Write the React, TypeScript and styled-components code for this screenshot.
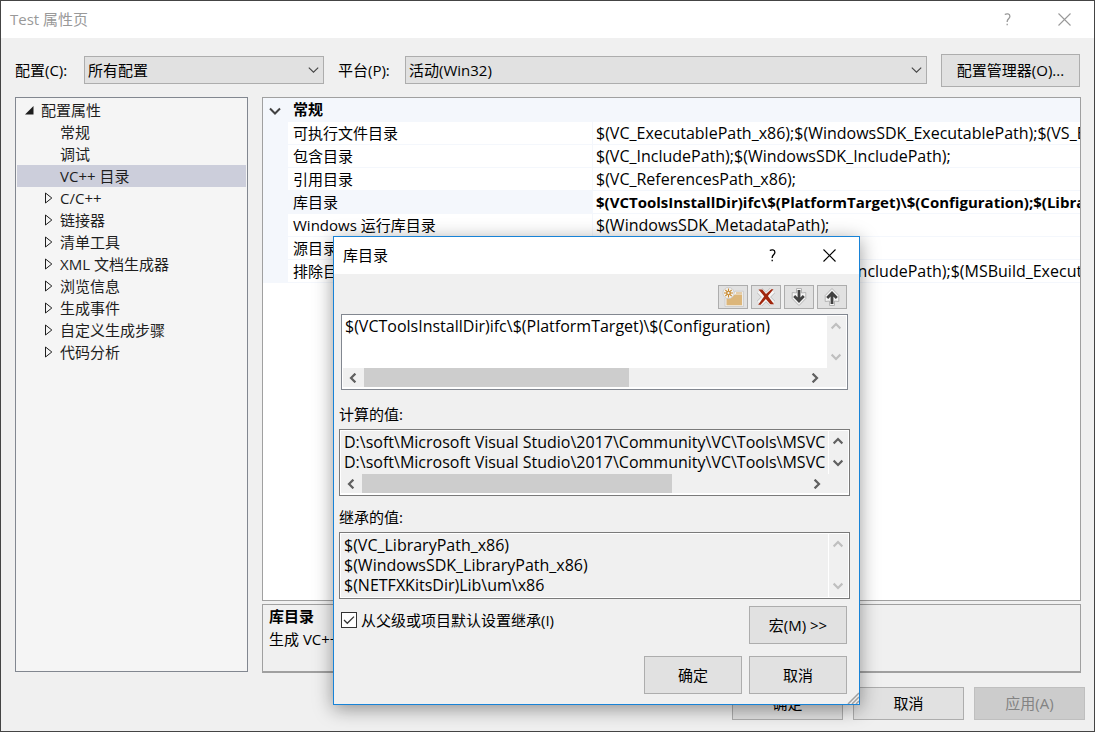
import React from "react";
import styled, { createGlobalStyle } from "styled-components";

const GlobalStyle = createGlobalStyle`
  *, *::before, *::after { box-sizing: border-box; }
  body { margin: 0; background: #f0f0f0; }
  body, button, select, textarea, input {
    font-family: "Open Sans", "Noto Sans CJK SC", sans-serif;
    font-size: 15px;
    line-height: 20px;
    color: #000;
  }
`;

const Window = styled.main`
  position: relative;
  display: flex;
  flex-direction: column;
  min-height: 100vh;
  border: 1px solid #444;
  background: #f0f0f0;
  overflow: hidden;
`;

const TitleBar = styled.header<{ $muted?: boolean }>`
  display: flex;
  align-items: center;
  height: 37px;
  flex: none;
  padding: 0 8px 1px 9px;
  background: #fff;
  color: ${(p) => (p.$muted ? "#999" : "#000")};
`;

const Title = styled.h1`
  flex: 1;
  margin: 0;
  font-size: 15px;
  font-weight: 400;
`;

const CaptionButton = styled.button`
  display: flex;
  align-items: center;
  justify-content: center;
  width: 44px;
  height: 30px;
  margin-left: 13px;
  padding: 0;
  border: 0;
  background: none;
  color: inherit;
`;

const ConfigBar = styled.div`
  display: flex;
  align-items: flex-start;
  flex: none;
  height: 33px;
  margin: 16px 14px 10px;
`;

const FieldLabel = styled.label<{ $width: number }>`
  flex: none;
  width: ${(p) => p.$width}px;
  padding-top: 6px;
  white-space: nowrap;
`;

const SelectWrap = styled.span<{ $width?: number }>`
  position: relative;
  display: flex;
  flex: ${(p) => (p.$width ? `0 0 ${p.$width}px` : "1 1 0")};
  margin: 2px 14px 0 0;
  svg {
    position: absolute;
    right: 5px;
    top: 11px;
    pointer-events: none;
  }
`;

const Select = styled.select`
  appearance: none;
  width: 100%;
  height: 28px;
  padding: 0 24px 0 3px;
  border: 1px solid #adadad;
  border-radius: 0;
  background: #e1e1e1;
`;

const PushButton = styled.button<{ $width: number; $tall?: boolean }>`
  flex: none;
  width: ${(p) => p.$width}px;
  height: ${(p) => (p.$tall ? 38 : 33)}px;
  padding: ${(p) => (p.$tall ? "0" : "0 0 2px")};
  border: 1px solid #adadad;
  background: #e1e1e1;
  white-space: nowrap;
  &:disabled {
    border-color: #bfbfbf;
    background: #ccc;
    color: #838383;
  }
`;

const Panels = styled.div`
  display: grid;
  grid-template-columns: 233px minmax(0, 1fr);
  column-gap: 14px;
  flex: 1;
  padding: 0 13px 0 14px;
`;

const Tree = styled.ul`
  margin: 0 0 1px;
  padding: 1px;
  list-style: none;
  border: 1px solid #828790;
  background: #f5f5f5;
  color: #1e1e1e;
`;

const TreeRow = styled.li<{ $root?: boolean; $selected?: boolean }>`
  display: flex;
  align-items: center;
  height: 22px;
  padding-left: ${(p) => (p.$root ? 8 : 27)}px;
  background: ${(p) => (p.$selected ? "#cccedb" : "transparent")};
  white-space: nowrap;
`;

const TreeGlyph = styled.span`
  display: flex;
  width: 16px;
`;

const Details = styled.div`
  display: flex;
  flex-direction: column;
  gap: 3px;
  min-width: 0;
`;

const PropertyPane = styled.section`
  flex: 1;
  border: 1px solid #a0a0a0;
  background: #fff;
  overflow: hidden;
`;

const PropertyTable = styled.table`
  width: 100%;
  table-layout: fixed;
  border-collapse: separate;
  border-spacing: 0;
`;

const Gutter = styled.td`
  padding: 0 0 3px;
  background: #f4f7fc;
`;

const GroupName = styled.th`
  height: 24px;
  padding: 0 5px 3px;
  background: #f4f7fc;
  text-align: left;
  font-weight: 700;
`;

const PropertyName = styled.th<{ $selected?: boolean }>`
  height: 23px;
  padding: 0 5px 1px;
  border-right: 1px solid #f4f7fc;
  border-bottom: 1px solid #f4f7fc;
  background: ${(p) => (p.$selected ? "#f4f7fc" : "#fff")};
  text-align: left;
  font-weight: 400;
  white-space: nowrap;
`;

const PropertyValue = styled.td<{ $bold?: boolean }>`
  height: 23px;
  padding: 0 0 1px 3px;
  border-bottom: 1px solid #f4f7fc;
  font-size: ${(p) => (p.$bold ? 15 : 16)}px;
  font-weight: ${(p) => (p.$bold ? 700 : 400)};
  white-space: nowrap;
  overflow: hidden;
`;

const Description = styled.section`
  height: 69px;
  padding: 0 6px;
  border: 1px solid #a0a0a0;
  border-bottom-width: 2px;
  h2, p { margin: 0; font-size: 15px; line-height: 23px; }
`;

const WindowActions = styled.footer`
  display: flex;
  justify-content: flex-end;
  gap: 10px;
  flex: none;
  padding: 14px 9px 11px;
`;

const Dialog = styled.section`
  position: absolute;
  left: 332px;
  top: 235px;
  width: 527px;
  border: 1px solid #1883d7;
  background: #f0f0f0;
  box-shadow: 0 4px 18px rgba(0, 0, 0, 0.4);
`;

const DialogBody = styled.div`
  padding: 11px 9px 10px 5px;
`;

const IconBar = styled.div`
  display: flex;
  justify-content: flex-end;
  gap: 3px;
  margin: 0 3px 5px;
`;

const IconButton = styled.button`
  display: flex;
  align-items: center;
  justify-content: center;
  width: 30px;
  height: 24px;
  padding: 0;
  border: 1px solid #adadad;
  background: #e1e1e1;
`;

const CaptionLabel = styled.label`
  display: block;
  margin: 11px 0 5px;
`;

const EditorFrame = styled.div<{ $editable?: boolean }>`
  display: grid;
  grid-template-columns: minmax(0, 1fr) 20px;
  grid-template-rows: minmax(0, 1fr) auto;
  height: ${(p) => (p.$editable ? 76 : 67)}px;
  margin: ${(p) => (p.$editable ? "0 2px 14px" : "0")};
  padding: 1px;
  border: 1px solid ${(p) => (p.$editable ? "#828790" : "#7a7a7a")};
  background: ${(p) => (p.$editable ? "#fff" : "#f0f0f0")};
  box-shadow: inset 0 0 0 1px #fff;
`;

const Editor = styled.textarea`
  display: block;
  width: 100%;
  height: 100%;
  padding: 0 2px;
  border: 0;
  outline: 0;
  background: transparent;
  font-size: 16px;
  resize: none;
  overflow: hidden;
  white-space: pre;
  &:read-only { padding: 1px 3px 0; }
`;

const VerticalBar = styled.div<{ $dim?: boolean }>`
  display: flex;
  flex-direction: column;
  justify-content: space-between;
  padding-bottom: 1px;
  border-left: 1px solid #fff;
  background: #f0f0f0;
  color: ${(p) => (p.$dim ? "#bfbfbf" : "#606060")};
`;

const HorizontalBar = styled.div`
  display: flex;
  grid-column: 1 / 3;
  height: 20px;
  padding-right: 22px;
  border-bottom: 1px solid #fff;
  background: #f0f0f0;
  color: #606060;
`;

const ScrollTrack = styled.div`
  flex: 1;
  padding-left: 2px;
`;

const ScrollThumb = styled.div<{ $width: number }>`
  width: ${(p) => p.$width}px;
  height: 19px;
  background: #cdcdcd;
`;

const ScrollButton = styled.button`
  display: flex;
  align-items: center;
  justify-content: center;
  width: 19px;
  height: 20px;
  padding: 0 2px 0 0;
  border: 0;
  background: none;
  color: inherit;
  ${HorizontalBar} & { padding-right: 0; }
`;

const DialogRow = styled.div<{ $gap: number }>`
  display: flex;
  align-items: flex-start;
  justify-content: flex-end;
  gap: 7px;
  margin: ${(p) => p.$gap}px 3px 0 2px;
`;

const CheckLabel = styled.label`
  position: relative;
  display: flex;
  align-items: center;
  gap: 4px;
  flex: 1;
  margin-top: 4px;
  svg {
    position: absolute;
    left: 2px;
    top: 4px;
    pointer-events: none;
  }
`;

const CheckBox = styled.input`
  appearance: none;
  width: 16px;
  height: 16px;
  margin: 0;
  border: 1px solid #333;
  background: #fff;
`;

const Grip = styled.svg`
  position: absolute;
  right: 0;
  bottom: 0;
`;

const CloseIcon = () => (
  <svg width="13" height="13" viewBox="0 0 13 13" stroke="currentColor" strokeWidth="1.1" aria-hidden="true">
    <path d="M.5.5l12 12M12.5.5l-12 12" />
  </svg>
);

const HelpIcon = () => (
  <svg width="7" height="13" viewBox="0 0 7 13" fill="none" stroke="currentColor" strokeWidth="1.3" aria-hidden="true">
    <path d="M.8 1.6C2.5.3 5.9.5 5.9 3.2c0 2.4-2.7 2.6-2.7 5.2v.7M3.2 10.8v1.5" />
  </svg>
);

const ComboArrow = () => (
  <svg width="11" height="6" viewBox="0 0 11 6" fill="none" stroke="#444" strokeWidth="1.1" aria-hidden="true">
    <path d="M.8.6l4.7 4.6L10.2.6" />
  </svg>
);

const turns = { up: 0, right: 90, down: 180, left: 270 };

const Chevron = ({ to }: { to: keyof typeof turns }) => (
  <svg width="10" height="10" viewBox="0 0 10 10" fill="none" stroke="currentColor" strokeWidth="2.2" aria-hidden="true">
    <path d="M.6 7.4L5 3l4.400 4.400" transform={`rotate(${turns[to]} 5 5)`} />
  </svg>
);

const NewFolderIcon = () => (
  <svg width="22" height="20" viewBox="0 0 22 20" aria-hidden="true">
    <path d="M3 11v8.600h18.400V4.200H13L11.500 6.500H8z" fill="#f3f1ee" stroke="#c6c6c6" strokeWidth=".8" />
    <path d="M4.500 8.800h6.800l1.600-1.300h7.100v10.800H4.500z" fill="#dcb67a" />
    <path d="M14 5.400h6v1.200h-6z" fill="#dcb67a" />
    <circle cx="6.500" cy="6" r="5.600" fill="#f3f1ee" stroke="#c6c6c6" strokeWidth=".8" />
    <path d="M6.500 1.500v9M2 6h9M3.300 2.800l6.400 6.400M9.700 2.800L3.300 9.200" stroke="#c98a2e" strokeWidth="1.100" />
    <circle cx="6.500" cy="6" r="1.700" fill="#f3f1ee" stroke="#c27d1a" />
  </svg>
);

const DeleteIcon = () => (
  <svg width="20" height="20" viewBox="0 0 20 20" fill="none" aria-hidden="true">
    <path d="M3.500 3.500l13 13M16.500 3.500l-13 13" stroke="#bdbdbd" strokeWidth="7.400" />
    <path d="M3.500 3.500l13 13M16.500 3.500l-13 13" stroke="#f5f5f5" strokeWidth="6" />
    <path d="M2.500 2.500h3.800L10 6.900l5.300-4.600h2.200l-5.600 6.800 6.100 8.100h-3.700L9.800 11.900 4.600 17.700H2.200l6-8.400z" fill="#a1260d" />
  </svg>
);

const MoveIcon = ({ up }: { up?: boolean }) => (
  <svg width="16" height="18" viewBox="0 0 16 18" fill="none" aria-hidden="true">
    <g transform={up ? "rotate(180 8 9)" : undefined}>
      <path d="M5.500.5h5v4.500L14.800 4.500v6L8 17.500 1.200 10.500v-6l4.300.5z" fill="#f5f5f5" stroke="#b4b4b4" />
      <path d="M8 2v11.500M3.200 8L8 12.900 12.800 8" stroke="#424242" strokeWidth="2.800" />
    </g>
  </svg>
);

const treeItems = [
  { text: "配置属性", root: true },
  { text: "常规", leaf: true },
  { text: "调试", leaf: true },
  { text: "VC++ 目录", leaf: true, selected: true },
  { text: "C/C++" },
  { text: "链接器" },
  { text: "清单工具" },
  { text: "XML 文档生成器" },
  { text: "浏览信息" },
  { text: "生成事件" },
  { text: "自定义生成步骤" },
  { text: "代码分析" },
];

const properties = [
  { name: "可执行文件目录", value: "$(VC_ExecutablePath_x86);$(WindowsSDK_ExecutablePath);$(VS_ExecutablePath);" },
  { name: "包含目录", value: "$(VC_IncludePath);$(WindowsSDK_IncludePath);" },
  { name: "引用目录", value: "$(VC_ReferencesPath_x86);" },
  { name: "库目录", value: "$(VCToolsInstallDir)ifc\\$(PlatformTarget)\\$(Configuration);$(LibraryPath)", selected: true },
  { name: "Windows 运行库目录", value: "$(WindowsSDK_MetadataPath);" },
  { name: "源目录", value: "$(VC_SourcePath);" },
  { name: "排除目录", value: "$(VC_IncludePath);$(WindowsSDK_IncludePath);$(MSBuild_ExecutablePath);" },
];

interface ScrollBoxProps {
  id: string;
  text: string;
  label?: string;
  editable?: boolean;
  dim?: boolean;
  thumb?: number;
}

const ScrollBox = ({ id, text, label, editable, dim, thumb }: ScrollBoxProps) => (
  <EditorFrame $editable={editable}>
    <Editor id={id} aria-label={label} wrap="off" readOnly={!editable} defaultValue={text} />
    <VerticalBar $dim={dim}>
      <ScrollButton aria-label="向上滚动"><Chevron to="up" /></ScrollButton>
      <ScrollButton aria-label="向下滚动"><Chevron to="down" /></ScrollButton>
    </VerticalBar>
    {thumb && (
      <HorizontalBar>
        <ScrollButton aria-label="向左滚动"><Chevron to="left" /></ScrollButton>
        <ScrollTrack><ScrollThumb $width={thumb} /></ScrollTrack>
        <ScrollButton aria-label="向右滚动"><Chevron to="right" /></ScrollButton>
      </HorizontalBar>
    )}
  </EditorFrame>
);

const DirectoryDialog = () => (
  <Dialog role="dialog" aria-label="库目录">
    <TitleBar>
      <Title as="h2">库目录</Title>
      <CaptionButton aria-label="帮助"><HelpIcon /></CaptionButton>
      <CaptionButton aria-label="关闭"><CloseIcon /></CaptionButton>
    </TitleBar>
    <DialogBody>
      <IconBar>
        <IconButton aria-label="新行"><NewFolderIcon /></IconButton>
        <IconButton aria-label="删除"><DeleteIcon /></IconButton>
        <IconButton aria-label="下移"><MoveIcon /></IconButton>
        <IconButton aria-label="上移"><MoveIcon up /></IconButton>
      </IconBar>
      <ScrollBox
        id="paths"
        label="目录列表"
        editable
        dim
        thumb={265}
        text="$(VCToolsInstallDir)ifc\$(PlatformTarget)\$(Configuration)"
      />
      <CaptionLabel htmlFor="computed">计算的值:</CaptionLabel>
      <ScrollBox
        id="computed"
        thumb={310}
        text={
          "D:\\soft\\Microsoft Visual Studio\\2017\\Community\\VC\\Tools\\MSVC\n" +
          "D:\\soft\\Microsoft Visual Studio\\2017\\Community\\VC\\Tools\\MSVC"
        }
      />
      <CaptionLabel htmlFor="inherited">继承的值:</CaptionLabel>
      <ScrollBox
        id="inherited"
        dim
        text={"$(VC_LibraryPath_x86)\n$(WindowsSDK_LibraryPath_x86)\n$(NETFXKitsDir)Lib\\um\\x86"}
      />
      <DialogRow $gap={7}>
        <CheckLabel>
          <CheckBox type="checkbox" defaultChecked />
          <svg width="12" height="12" viewBox="0 0 12 12" fill="none" stroke="#333" strokeWidth="1.3" aria-hidden="true">
            <path d="M1 6l3.300 3.300L11 2.600" />
          </svg>
          从父级或项目默认设置继承(I)
        </CheckLabel>
        <PushButton $width={98} $tall>宏(M) &gt;&gt;</PushButton>
      </DialogRow>
      <DialogRow $gap={12}>
        <PushButton $width={98} $tall>确定</PushButton>
        <PushButton $width={98} $tall>取消</PushButton>
      </DialogRow>
    </DialogBody>
    <Grip width="12" height="12" viewBox="0 0 12 12" stroke="#a0a0a0" strokeWidth="1.500" aria-hidden="true">
      <path d="M1 12L12 1M5 12l7-7M9 12l3-3" />
    </Grip>
  </Dialog>
);

export default function App() {
  return (
    <>
      <GlobalStyle />
      <Window>
        <TitleBar $muted>
          <Title>Test 属性页</Title>
          <CaptionButton aria-label="帮助"><HelpIcon /></CaptionButton>
          <CaptionButton aria-label="关闭"><CloseIcon /></CaptionButton>
        </TitleBar>
        <ConfigBar>
          <FieldLabel htmlFor="configuration" $width={69}>配置(C):</FieldLabel>
          <SelectWrap $width={240}>
            <Select id="configuration"><option>所有配置</option></Select>
            <ComboArrow />
          </SelectWrap>
          <FieldLabel htmlFor="platform" $width={67}>平台(P):</FieldLabel>
          <SelectWrap>
            <Select id="platform"><option>活动(Win32)</option></Select>
            <ComboArrow />
          </SelectWrap>
          <PushButton $width={139}>配置管理器(O)...</PushButton>
        </ConfigBar>
        <Panels>
          <Tree>
            {treeItems.map((item) => (
              <TreeRow key={item.text} $root={item.root} $selected={item.selected}>
                <TreeGlyph>
                  {item.root && (
                    <svg width="9" height="9" viewBox="0 0 9 9" aria-hidden="true"><path d="M8.500 0v8.500H0z" fill="#1e1e1e" /></svg>
                  )}
                  {!item.root && !item.leaf && (
                    <svg width="9" height="12" viewBox="0 0 9 12" fill="none" stroke="#1e1e1e" aria-hidden="true">
                      <path d="M1.500 1v10L7.800 6z" />
                    </svg>
                  )}
                </TreeGlyph>
                {item.text}
              </TreeRow>
            ))}
          </Tree>
          <Details>
            <PropertyPane>
              <PropertyTable>
                <colgroup>
                  <col style={{ width: 25 }} />
                  <col style={{ width: 305 }} />
                  <col />
                </colgroup>
                <tbody>
                  <tr>
                    <Gutter>
                      <svg width="24" height="8" viewBox="0 0 24 8" fill="none" stroke="#424242" strokeWidth="2" aria-hidden="true">
                        <path d="M7 1.500l5 5 5-5" />
                      </svg>
                    </Gutter>
                    <GroupName colSpan={2} scope="rowgroup">常规</GroupName>
                  </tr>
                  {properties.map((row) => (
                    <tr key={row.name}>
                      <Gutter />
                      <PropertyName scope="row" $selected={row.selected}>{row.name}</PropertyName>
                      <PropertyValue $bold={row.selected}>{row.value}</PropertyValue>
                    </tr>
                  ))}
                </tbody>
              </PropertyTable>
            </PropertyPane>
            <Description>
              <h2>库目录</h2>
              <p>生成 VC++ 项目时，用于搜索库文件的路径。</p>
            </Description>
          </Details>
        </Panels>
        <WindowActions>
          <PushButton $width={111}>确定</PushButton>
          <PushButton $width={111}>取消</PushButton>
          <PushButton $width={111} disabled>应用(A)</PushButton>
        </WindowActions>
        <DirectoryDialog />
      </Window>
    </>
  );
}
